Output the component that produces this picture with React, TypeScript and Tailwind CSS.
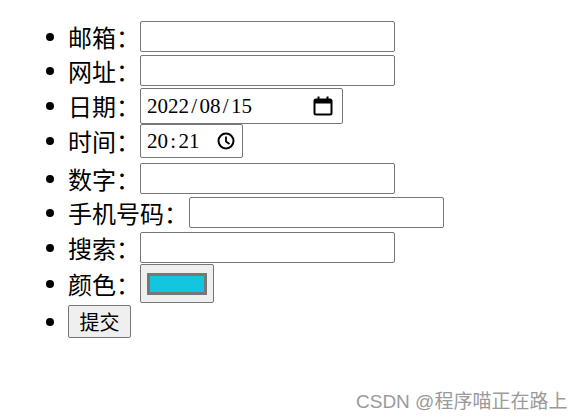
import React from "react";

const cjk = { fontFamily: '"Microsoft YaHei", "Noto Sans CJK SC", sans-serif' };

// fixed-width characters, the way the date/time fields draw them
const Mono = ({ text }: { text: string }) => (
    <span className="flex text-[21px] leading-none text-black" style={{ fontFamily: '"Liberation Serif", serif' }}>
        {text.split("").map((ch, i) => (
            <span key={i} className="inline-block w-[10.5px] text-center">{ch}</span>
        ))}
    </span>
);

const CalendarIcon = () => (
    <svg width="20" height="20" viewBox="0 0 20 20" className="shrink-0">
        <rect x="1.5" y="3.5" width="17" height="15" rx="1.5" fill="none" stroke="#000" strokeWidth="2" />
        <rect x="1.5" y="3.5" width="17" height="4" fill="#000" />
        <rect x="4.5" y="0.5" width="2" height="4" fill="#000" />
        <rect x="13.5" y="0.5" width="2" height="4" fill="#000" />
    </svg>
);

const ClockIcon = () => (
    <svg width="18" height="18" viewBox="0 0 18 18" className="shrink-0">
        <circle cx="9" cy="9" r="7.5" fill="none" stroke="#000" strokeWidth="2" />
        <path d="M9 4.5V9.5L12.5 12" fill="none" stroke="#000" strokeWidth="1.8" />
    </svg>
);

const Bullet = () => <span className="absolute left-[-22px] top-1/2 h-2 w-2 -translate-y-1/2 rounded-full bg-black" />;

const TextBox = () => (
    <input type="text" className="h-[31px] w-[255px] rounded-[2px] border border-[#767676] bg-white outline-none" />
);

export default function App() {
    return (
        <div className="relative h-[420px] w-[582px] overflow-hidden bg-white" style={cjk}>
            <ul className="pl-[68px] text-[24px] leading-none text-black">
                <li className="relative mt-[21px] flex h-[31px] items-center">
                    <Bullet />
                    <span>邮箱：</span>
                    <TextBox />
                </li>
                <li className="relative mt-[3px] flex h-[31px] items-center">
                    <Bullet />
                    <span>网址：</span>
                    <TextBox />
                </li>
                <li className="relative mt-[2px] flex h-[36px] items-center">
                    <Bullet />
                    <span>日期：</span>
                    <div className="flex h-[36px] w-[203px] items-center justify-between rounded-[2px] border border-[#767676] pl-[6px] pr-[9px]">
                        <Mono text="2022/08/15" />
                        <CalendarIcon />
                    </div>
                </li>
                <li className="relative flex h-[34px] items-center">
                    <Bullet />
                    <span>时间：</span>
                    <div className="flex h-[34px] w-[103px] items-center justify-between rounded-[2px] border border-[#767676] pl-[6px] pr-[7px]">
                        <Mono text="20:21" />
                        <ClockIcon />
                    </div>
                </li>
                <li className="relative mt-[5px] flex h-[31px] items-center">
                    <Bullet />
                    <span>数字：</span>
                    <TextBox />
                </li>
                <li className="relative mt-[3px] flex h-[31px] items-center">
                    <Bullet />
                    <span>手机号码：</span>
                    <span className="ml-px"><TextBox /></span>
                </li>
                <li className="relative mt-[4px] flex h-[31px] items-center">
                    <Bullet />
                    <span>搜索：</span>
                    <TextBox />
                </li>
                <li className="relative mt-px flex h-[39px] items-center">
                    <Bullet />
                    <span>颜色：</span>
                    <div className="flex h-[39px] w-[74px] items-center justify-center rounded-[2px] border border-[#767676] bg-[#efefef]">
                        <div className="h-[22px] w-[60px] border-[3px] border-[#777777] bg-[#12c6e0]" />
                    </div>
                </li>
                <li className="relative mt-[2px] flex h-[33px] items-center">
                    <Bullet />
                    <button className="h-[33px] w-[63px] rounded-[2px] border border-[#767676] bg-[#efefef] text-[20px] leading-none text-black">
                        提交
                    </button>
                </li>
            </ul>
            <div className="absolute left-[356px] top-[391px] whitespace-nowrap text-[19px] leading-[22px] text-[#9a9a9a]" style={{ fontFamily: '"Liberation Sans", "Noto Sans CJK SC", sans-serif' }}>
                CSDN @程序喵正在路上
            </div>
        </div>
    );
}
